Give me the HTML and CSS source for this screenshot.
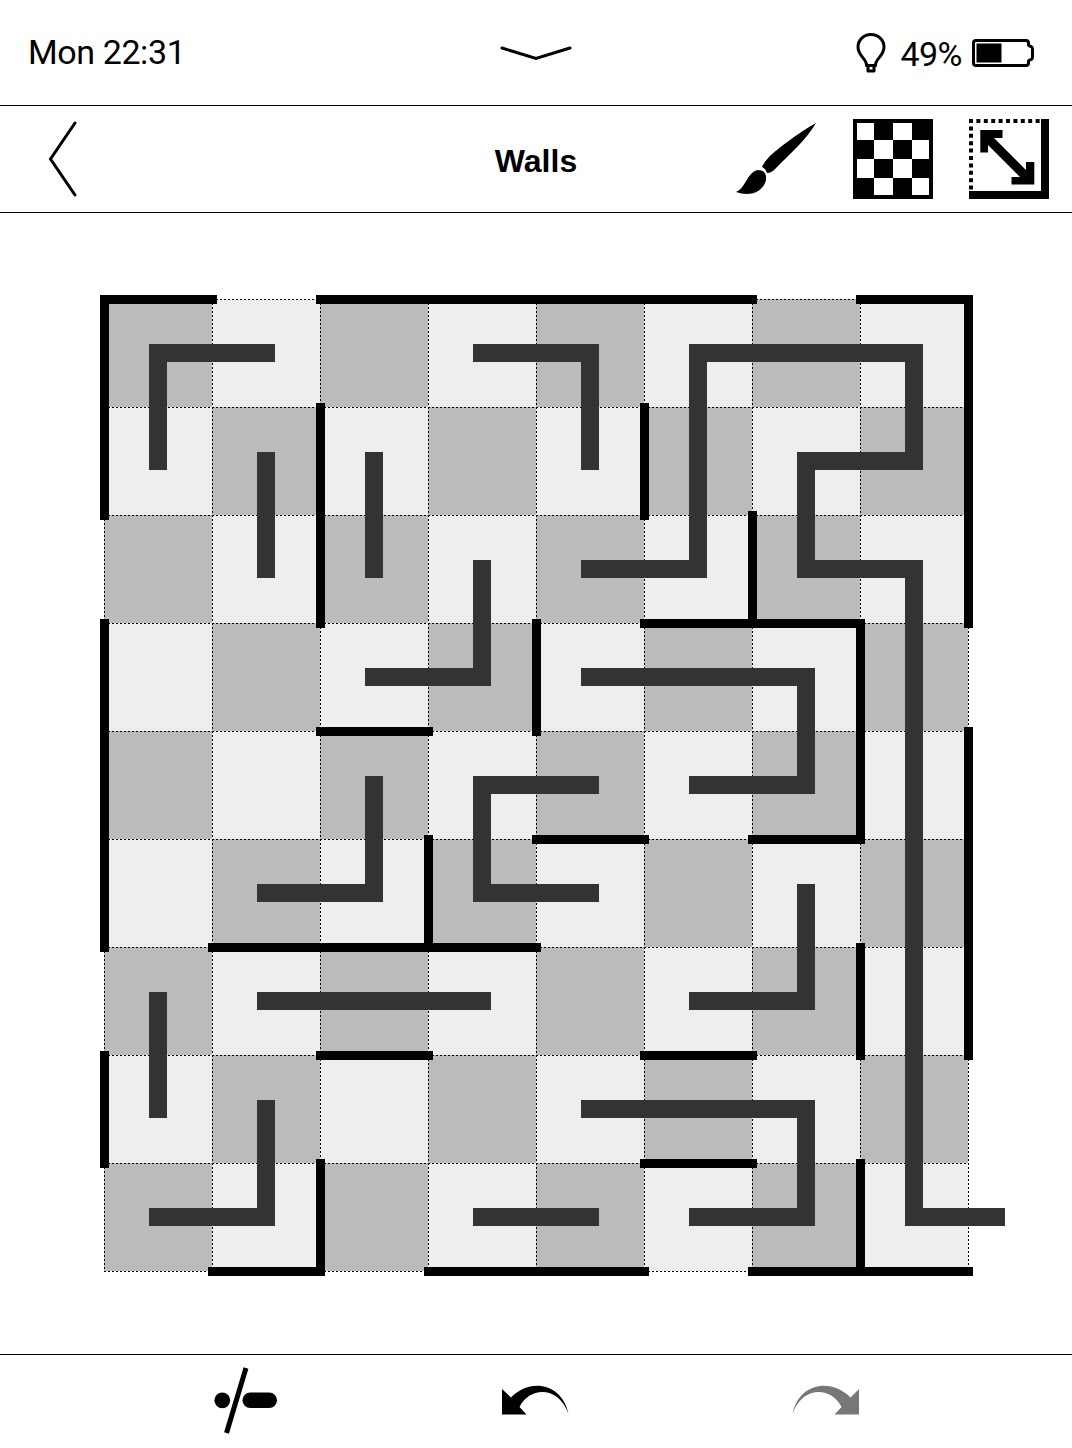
FILE: index.html
```html
<!DOCTYPE html>
<html lang="en">
<head>
<meta charset="utf-8">
<title>Walls</title>
<link rel="stylesheet" href="styles.css">
</head>
<body>
<header class="status">
  <span class="clock">Mon 22:31</span>
  <svg class="pull" width="76" height="20" viewBox="0 0 76 20"><path d="M4 5 38 15.500 72 5"/></svg>
  <div class="power">
    <svg class="bulb" width="32" height="44" viewBox="0 0 32 44"><path d="M11.500 34.500C12 28 3 25 3 16A13 12.500 0 0 1 29 16C29 25 20 28 20.500 34.500Z"/><path d="M13 35V40H19V35"/></svg>
    <span class="percent">49%</span>
    <svg class="battery" width="64" height="30" viewBox="0 0 64 30"><path d="M4 2.500H54Q56.500 2.500 56.500 5V7Q57 8 59 8.500Q60.500 9 60.500 11V19Q60.500 21 59 21.500Q57 22 56.500 23V25Q56.500 27.500 54 27.500H4Q1.500 27.500 1.500 25V5Q1.500 2.500 4 2.500Z"/><rect x="4.500" y="5.500" width="25" height="19"/></svg>
  </div>
</header>
<nav class="toolbar">
  <svg class="back" width="36" height="80" viewBox="0 0 36 80"><path d="M30 4 5.500 40 30 76"/></svg>
  <h1 class="title">Walls</h1>
  <div class="tools">
    <svg width="82" height="80" viewBox="0 0 82 80"><path d="M81 4C63 14 41 31 34 38Q29 43 27 48Q31 50 32 54Q37 54 42 48C55 35 71 21 81 4ZM23 51C12 53 11 69 1 73C15 78 28 73 31 61Q32 51 23 51Z"/></svg>
    <svg width="80" height="80" viewBox="0 0 80 80"><path d="M0 0H80V80H0Z"/><path class="light" d="M4 4H21V21H4ZM40 4H59V21H40ZM21 21H40V40H21ZM59 21H76V40H59ZM4 40H21V59H4ZM40 40H59V59H40ZM21 59H40V76H21ZM59 59H76V76H59Z"/></svg>
    <svg width="80" height="80" viewBox="0 0 80 80"><path d="M72 0H80V80H0V72H72ZM11.300 11H33.500V19H25L57 51V43H65.300V65.500H42.500V58H51L19 26V33.500H11.300Z"/><path class="dots" d="M0 2H72M2 0V72"/></svg>
  </div>
</nav>
<main class="play">
  <svg class="board" width="912" height="984" viewBox="98 293 912 984">
    <defs><pattern id="checks" x="104" y="299" width="216" height="216" patternUnits="userSpaceOnUse"><rect class="pale" width="216" height="216"/><path class="shade" d="M0 0H108V108H0ZM108 108H216V216H108Z"/></pattern></defs>
    <rect x="104" y="299" width="864" height="972" fill="url(#checks)"/>
    <path class="grid" d="M104 299.500H969M104 407.500H969M104 515.500H969M104 623.500H969M104 731.500H969M104 839.500H969M104 947.500H969M104 1055.500H969M104 1163.500H969M104 1271.500H969M104.500 299V1272M212.500 299V1272M320.500 299V1272M428.500 299V1272M536.500 299V1272M644.500 299V1272M752.500 299V1272M860.500 299V1272M968.500 299V1272"/>
    <path class="trail" d="M158 461V353H266M482 353H590V461M590 569H698V353H914V461H806V569H914V1217H996M266 461V569M374 461V569M482 569V677H374M590 677H806V785H698M374 785V893H266M590 785H482V893H590M806 893V1001H698M266 1001H482M158 1001V1109M266 1109V1217H158M590 1109H806V1217H698M482 1217H590"/>
    <path class="wall" d="M212.500 299.500H104.500V515.500M320.500 299.500H752.500M860.500 299.500H968.500V623.500M320.500 407.500V623.500M644.500 407.500V515.500M752.500 515.500V623.500M104.500 623.500V947.500M536.500 623.500V731.500M644.500 623.500H860.500V839.500H752.500M320.500 731.500H428.500M968.500 731.500V1055.500M536.500 839.500H644.500M428.500 839.500V947.500M212.500 947.500H536.500M860.500 947.500V1055.500M320.500 1055.500H428.500M644.500 1055.500H752.500M104.500 1055.500V1163.500M644.500 1163.500H752.500M320.500 1163.500V1271.500H212.500M860.500 1163.500V1271.500M428.500 1271.500H644.500M752.500 1271.500H968.500"/>
  </svg>
</main>
<footer class="actions">
  <svg width="68" height="68" viewBox="0 0 68 68"><circle cx="10.300" cy="34.300" r="7.900"/><rect x="30.500" y="26.500" width="34.500" height="15.500" rx="7.750"/><path class="slash" d="M34 2 14.500 67"/></svg>
  <svg width="68" height="68" viewBox="0 0 68 68"><path d="M0 23 9 31.500C27 12 60 16 66.500 48C57 20 28 20 17.500 41L24.500 48.500H0Z"/></svg>
  <svg class="disabled" width="68" height="68" viewBox="0 0 68 68"><path d="M67 23 58.500 31.500C40 12 7 16 .5 48C10 20 39 20 49.500 41L42.500 48.500H67Z"/></svg>
</footer>
</body>
</html>
```
FILE: styles.css
```css
* { box-sizing: border-box; }
body { margin: 0; width: 1072px; height: 1448px; display: flex; flex-direction: column; background: #fff; color: #000; font-family: Roboto, sans-serif; overflow: hidden; }
svg { display: block; flex: none; }
.status, .toolbar { display: grid; grid-template-columns: 1fr auto 1fr; align-items: center; border-bottom: 1px solid #000; }
.status { height: 106px; padding: 0 36px 0 28px; }
.clock { font-size: 34px; line-height: 40px; letter-spacing: -.4px; padding-bottom: 2px; }
.pull { margin-left: 8px; }
.pull path, .back path { fill: none; stroke: #000; stroke-width: 3; stroke-linecap: round; }
.power { display: flex; align-items: center; justify-content: flex-end; }
.bulb path { fill: none; stroke: #000; stroke-width: 3; stroke-linejoin: round; }
.percent { font-size: 34px; line-height: 40px; letter-spacing: -.5px; margin: 3px 10px 0 13px; }
.battery path { fill: none; stroke: #000; stroke-width: 3; }
.toolbar { height: 107px; padding: 0 23px 0 45px; }
.title { margin: 0 22px 0 0; padding-top: 4px; font: bold 32px/40px "Liberation Sans", sans-serif; }
.tools { display: flex; justify-content: flex-end; gap: 36px; }
.light { fill: #fff; }
.dots { fill: none; stroke: #000; stroke-width: 4; stroke-dasharray: 4 3.400; }
.play { flex: 1; padding: 80px 0 0 98px; }
.pale { fill: #eee; }
.shade { fill: #bbb; }
.grid { fill: none; stroke: #000; stroke-dasharray: 2 2; shape-rendering: crispEdges; }
.trail { fill: none; stroke: #333; stroke-width: 18; stroke-linecap: square; shape-rendering: crispEdges; }
.wall { fill: none; stroke: #000; stroke-width: 9; stroke-linecap: square; shape-rendering: crispEdges; }
.actions { height: 94px; border-top: 1px solid #000; display: flex; justify-content: space-between; padding: 11px 212px 0; }
.slash { fill: none; stroke: #000; stroke-width: 5; }
.disabled { fill: #777; }
```
